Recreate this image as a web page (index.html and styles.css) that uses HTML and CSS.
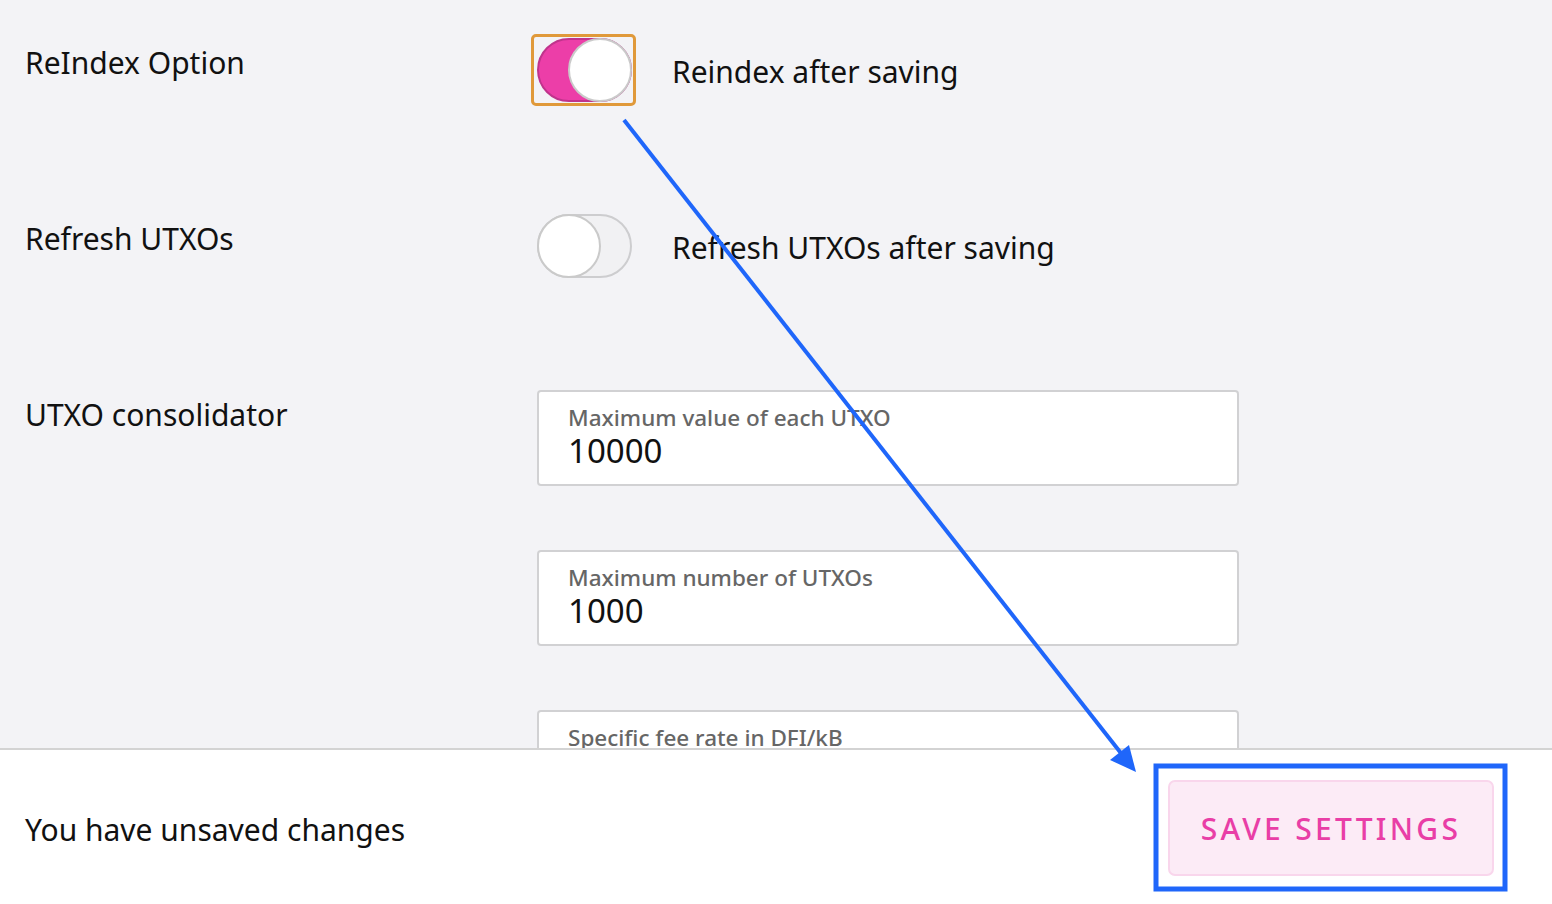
FILE: index.html
```html
<!DOCTYPE html>
<html lang="en">
<head>
    <meta charset="UTF-8">
    <meta name="viewport" content="width=device-width, initial-scale=1.0">
    <title>Settings</title>
    <link rel="stylesheet" href="styles.css">
</head>
<body>
    <div class="page">
        <main class="settings">
            <div class="row">
                <div class="row-label">ReIndex Option</div>
                <label class="switch-line">
                    <span class="switch-focus">
                        <span class="switch on"><span class="knob"></span></span>
                    </span>
                    <span class="switch-text">Reindex after saving</span>
                </label>
            </div>
            <div class="row">
                <div class="row-label">Refresh UTXOs</div>
                <label class="switch-line">
                    <span class="switch-focus plain">
                        <span class="switch"><span class="knob"></span></span>
                    </span>
                    <span class="switch-text">Refresh UTXOs after saving</span>
                </label>
            </div>
            <div class="row">
                <div class="row-label">UTXO consolidator</div>
                <div class="fields">
                    <div class="field">
                        <span class="field-label">Maximum value of each UTXO</span>
                        <span class="field-value">10000</span>
                    </div>
                    <div class="field">
                        <span class="field-label">Maximum number of UTXOs</span>
                        <span class="field-value">1000</span>
                    </div>
                    <div class="field">
                        <span class="field-label">Specific fee rate in DFI/kB</span>
                    </div>
                </div>
            </div>
        </main>
        <footer class="bar">
            <p>You have unsaved changes</p>
            <button class="save">SAVE SETTINGS</button>
        </footer>
    </div>

    <svg class="marks" width="1552" height="904" viewBox="0 0 1552 904">
        <line x1="624" y1="120" x2="1124" y2="757" stroke="#1f66fa" stroke-width="4"/>
        <polygon points="1136,772 1110,760 1129,745" fill="#1f66fa"/>
        <rect x="1156" y="766" width="349" height="123" fill="none" stroke="#1f66fa" stroke-width="5"/>
    </svg>
</body>
</html>
```

FILE: styles.css
```css
body {
    margin: 0;
    font-family: "Noto Sans", "Open Sans", sans-serif;
    color: #111;
}
.page {
    height: 904px;
    display: flex;
    flex-direction: column;
    overflow: hidden;
}
.settings {
    flex: 1;
    overflow: hidden;
    background-color: #f3f3f6;
    padding: 38px 0 0 25px;
}
.row {
    display: grid;
    grid-template-columns: 512px 1fr;
    align-items: start;
    height: 176px;
}
.row-label {
    font-size: 30px;
    line-height: 40px;
    margin-top: 5px;
}
.switch-line {
    display: flex;
    align-items: center;
    gap: 36px;
}
.switch-focus {
    display: block;
    padding: 1px 1px 1px 3px;
    margin: -4px 0 0 -6px;
    border: 3px solid #e0993a;
    border-radius: 5px;
}
.switch-focus.plain {
    border-color: transparent;
}
.switch {
    position: relative;
    display: block;
    width: 91px;
    height: 60px;
    border: 2px solid #cdcdcf;
    border-radius: 32px;
    background-color: #f1f1f3;
}
.switch.on {
    background-color: #ec3ea8;
    border-color: #c0338c;
}
.knob {
    position: absolute;
    top: -2px;
    left: -2px;
    width: 60px;
    height: 60px;
    border: 2px solid #cacaca;
    border-radius: 50%;
    background-color: #fff;
}
.switch.on .knob {
    left: 29px;
}
.switch-text {
    font-size: 30px;
    line-height: 40px;
}
.fields {
    display: flex;
    flex-direction: column;
    gap: 64px;
}
.field {
    width: 669px;
    height: 92px;
    box-sizing: content-box;
    border: 2px solid #d1d1d3;
    border-radius: 4px;
    background-color: #fff;
    padding: 0 0 0 29px;
    display: flex;
    flex-direction: column;
}
.field-label {
    font-size: 22.5px;
    line-height: 28px;
    color: #666;
    margin-top: 12px;
    font-weight: 500;
}
.field-value {
    font-size: 33px;
    line-height: 38px;
}
.bar {
    height: 154px;
    flex-shrink: 0;
    border-top: 2px solid #d3d3d3;
    background-color: #fff;
    display: flex;
    align-items: center;
    justify-content: space-between;
    padding: 0 58px 0 25px;
}
.bar p {
    margin: 4px 0 0;
    font-size: 30px;
}
.save {
    width: 326px;
    height: 96px;
    margin-top: 2px;
    background-color: #fcebf6;
    border: 2px solid #f9d6ec;
    border-radius: 7px;
    color: #e93ea6;
    font-family: "Noto Sans", sans-serif;
    font-size: 30px;
    font-weight: 500;
    letter-spacing: 3.3px;
}
.marks {
    position: absolute;
    top: 0;
    left: 0;
    pointer-events: none;
}
```
